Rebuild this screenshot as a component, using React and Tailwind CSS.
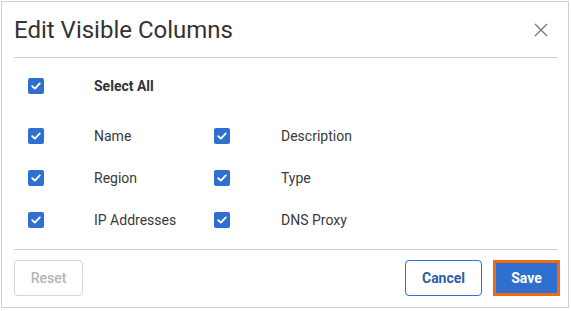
import React from "react";

function Check() {
  return (
    <span className="flex h-[16px] w-[16px] items-center justify-center rounded-[2px] bg-[#2f6fcf]">
      <svg width="12" height="12" viewBox="0 0 12 12" fill="none">
        <path d="M2.3 6.2 L4.9 8.6 L9.8 3.4" stroke="white" strokeWidth="1.9" strokeLinecap="round" strokeLinejoin="round" />
      </svg>
    </span>
  );
}

function Item({ label, cbw = 66 }) {
  return (
    <div className="flex h-[42px] items-center">
      <div className={cbw === 66 ? "w-[66px]" : "w-[67px]"}>
        <Check />
      </div>
      <span className="text-[14px] text-[#3a3a3a]">{label}</span>
    </div>
  );
}

export default function App() {
  return (
    <div className="h-[311px] w-[571px] bg-white pl-[1px] pt-[1px]" style={{ fontFamily: "Roboto, 'Liberation Sans', sans-serif" }}>
      <div className="flex h-[307px] w-[568px] flex-col border border-[#cfcfcf] bg-white">
        <div className="mx-[12px] mr-[10px] flex h-[56px] items-center justify-between border-b border-[#cfcfcf]">
          <h1 className="text-[24px] font-normal leading-none text-[#333]">Edit Visible Columns</h1>
          <svg width="14" height="14" viewBox="0 0 14 14" className="mr-[10px]">
            <path d="M1 1 L13 13 M13 1 L1 13" stroke="#7a7a7a" strokeWidth="1.4" />
          </svg>
        </div>
        <div className="ml-[26px] pt-[7px] pb-[8px]">
          <div className="flex h-[42px] items-center">
            <div className="w-[66px]">
              <Check />
            </div>
            <span className="text-[14px] font-bold text-[#333]">Select All</span>
          </div>
          <div className="mt-[8px] grid grid-cols-[186px_1fr]">
            <Item label="Name" />
            <Item label="Description" cbw={67} />
            <Item label="Region" />
            <Item label="Type" cbw={67} />
            <Item label="IP Addresses" />
            <Item label="DNS Proxy" cbw={67} />
          </div>
        </div>
        <div className="ml-[12px] mr-[10px] border-t border-[#cfcfcf]" />
        <div className="flex items-center justify-between pl-[12px] pr-[8px] pt-[10px]">
          <button className="h-[36px] w-[69px] rounded-[4px] border border-[#d4d4d4] bg-white text-[14px] font-medium text-[#b5b5b5]">
            Reset
          </button>
          <div className="flex items-center gap-[11px]">
            <button className="h-[36px] w-[77px] rounded-[4px] border border-[#2f6fcf] bg-white text-[14px] font-bold text-[#2c5ea8]">
              Cancel
            </button>
            <button className="h-[36px] w-[67px] border-[3px] border-[#f26a10] bg-[#2f6fcf] text-[14px] font-bold text-white">
              Save
            </button>
          </div>
        </div>
      </div>
    </div>
  );
}
